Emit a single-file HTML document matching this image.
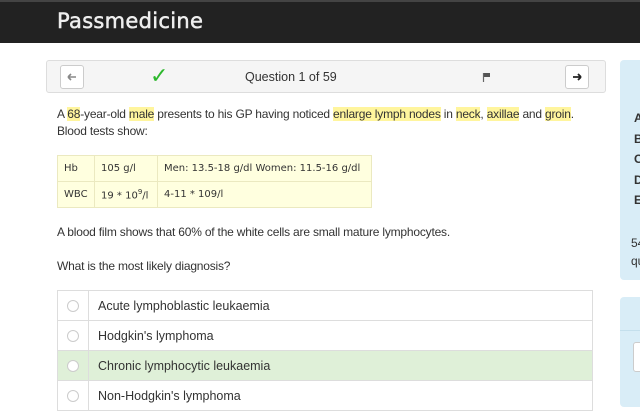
<!DOCTYPE html>
<html><head><style>
body{margin:0;width:640px;height:400px;overflow:hidden;background:#fff;font-family:"Liberation Sans",Arial,sans-serif;color:#333;position:relative}
.hdr{position:absolute;left:0;top:0;width:640px;height:43px;background:#222;border-top:2px solid #444;box-sizing:border-box}
.hdr span{position:absolute;left:57px;top:7px;font-family:"DejaVu Sans",sans-serif;font-size:21px;color:#eee;letter-spacing:0.3px;-webkit-text-stroke:0.5px #eee}
.nav{position:absolute;left:46px;top:60px;width:560px;height:33px;background:#f5f5f5;border:1px solid #ddd;border-radius:3px;box-sizing:border-box}
.btn{position:absolute;top:4px;width:22px;height:22px;background:#fff;border:1px solid #ccc;border-radius:3px}
.abs{position:absolute;white-space:nowrap}
p{margin:0;font-size:12px;line-height:17px;letter-spacing:-0.2px}
.hl{background:#fff59d}
table{border-collapse:collapse;position:absolute;white-space:nowrap}
.bt td{background:#ffffdf;border:1px solid #ebe9c0;font-family:"DejaVu Sans",sans-serif;font-size:10px;height:25px;padding:0 6px}
.ot td{border:1px solid #ddd;font-size:12.5px;height:29px;padding:0 9px}
.rad{width:10px;height:10px;border:1px solid #ccc;border-radius:50%;margin:0 auto;background:#fff}
.side{position:absolute;left:620px;top:60px;width:30px;height:220px;background:#d9edf7;border-radius:4px}
</style></head><body>
<div class="hdr"><span>Passmedicine</span></div>
<div class="nav">
<div class="btn" style="left:13px"><svg width="22" height="22"><path d="M7 11h8M7 11l3-3M7 11l3 3" stroke="#888" stroke-width="1.6" fill="none"/></svg></div>
<div class="abs" style="left:103px;top:2px;color:#2db82d;font-size:22px">&#10003;</div>
<div class="abs" style="left:198px;top:9px;font-size:12.5px">Question 1 of 59</div>
<div class="abs" style="left:435px;top:9px"><svg width="10" height="12"><path d="M1.5 2v9" stroke="#666" stroke-width="1.2"/><path d="M2 2h6v4H2z" fill="#555"/></svg></div>
<div class="btn" style="left:518px"><svg width="22" height="22"><path d="M7 11h8M15 11l-3-3M15 11l-3 3" stroke="#222" stroke-width="1.8" fill="none"/></svg></div>
</div>
<div class="side"></div>
<div class="abs" style="left:634px;top:108px;font-size:12px;font-weight:bold;line-height:20.5px">A<br>B<br>C<br>D<br>E</div>
<div class="abs" style="left:631px;top:234px;font-size:12px;line-height:18px">54<br>qu</div>
<div class="abs" style="left:620px;top:297px;width:30px;height:110px;background:#d9edf7;border-radius:4px"></div>
<div class="abs" style="left:620px;top:330px;width:30px;height:1px;background:#c4dfec"></div>
<div class="abs" style="left:633px;top:342px;width:10px;height:28px;background:#fff;border:1px solid #ccc;border-radius:3px"></div>
<p class="abs" style="left:57px;top:106px">A <span class="hl">68</span>-year-old <span class="hl">male</span> presents to his GP having noticed <span class="hl">enlarge lymph nodes</span> in <span class="hl">neck</span>, <span class="hl">axillae</span> and <span class="hl">groin</span>.<br>Blood tests show:</p>
<table class="bt" style="left:57px;top:155px;width:315px">
<tr><td style="width:24px">Hb</td><td style="width:50px">105 g/l</td><td>Men: 13.5-18 g/dl Women: 11.5-16 g/dl</td></tr>
<tr><td>WBC</td><td>19 * 10<sup style="font-size:7px">9</sup>/l</td><td>4-11 * 109/l</td></tr>
</table>
<p class="abs" style="left:57px;top:224px">A blood film shows that 60% of the white cells are small mature lymphocytes.</p>
<p class="abs" style="left:57px;top:258px">What is the most likely diagnosis?</p>
<table class="ot" style="left:57px;top:290px;width:536px">
<tr><td style="width:11px"><div class="rad"></div></td><td>Acute lymphoblastic leukaemia</td></tr>
<tr><td><div class="rad"></div></td><td>Hodgkin's lymphoma</td></tr>
<tr style="background:#dff0d8"><td><div class="rad"></div></td><td>Chronic lymphocytic leukaemia</td></tr>
<tr><td><div class="rad"></div></td><td>Non-Hodgkin's lymphoma</td></tr>
</table>
</body></html>
